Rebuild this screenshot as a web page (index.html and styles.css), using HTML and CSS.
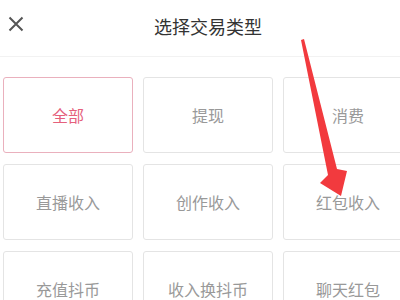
FILE: index.html
```html
<!DOCTYPE html>
<html lang="zh">

<head>
    <meta charset="UTF-8">
    <meta name="viewport" content="width=device-width, initial-scale=1.0">
    <title>选择交易类型</title>
    <link rel="stylesheet" href="styles.css">
</head>

<body>
    <div class="page">
        <div class="header">
            <svg class="close" width="16" height="16" viewBox="0 0 16 16">
                <path d="M1.5 1.5 L14.5 14.5 M14.5 1.5 L1.5 14.5" stroke="#555" stroke-width="2" fill="none" />
            </svg>
            <h1 class="title">选择交易类型</h1>
        </div>
        <main class="grid">
            <div class="item active">全部</div>
            <div class="item">提现</div>
            <div class="item">消费</div>
            <div class="item">直播收入</div>
            <div class="item">创作收入</div>
            <div class="item">红包收入</div>
            <div class="item">充值抖币</div>
            <div class="item">收入换抖币</div>
            <div class="item">聊天红包</div>
        </main>
        <!-- red arrow pointing at 红包收入 -->
        <svg class="arrow" width="400" height="300" viewBox="0 0 400 300">
            <path d="M301 40 L304 39 L337 169 L347 171 L341 196 L320 183 L328 175 Z" fill="#f23a3e" />
        </svg>
    </div>
</body>

</html>
```

FILE: styles.css
```css
body {
    margin: 0px;
    padding: 0px;
    background: #fff;
    font-family: "Noto Sans CJK SC", "Noto Sans", sans-serif;
}

.page {
    position: relative;
    width: 400px;
    height: 300px;
    overflow: hidden;
}

.header {
    position: relative;
    height: 56px;
    border-bottom: 1px solid #f2f2f2;
    display: flex;
    align-items: center;
    justify-content: center;
}

.close {
    position: absolute;
    left: 8px;
    top: 16px;
}

.title {
    margin: 0px;
    margin-left: 16px;
    margin-top: -4px;
    font-size: 18px;
    font-weight: normal;
    color: #333;
}

.grid {
    display: grid;
    grid-template-columns: 130px 130px 130px;
    grid-auto-rows: 76px;
    gap: 11px 10px;
    padding: 20px 0px 0px 3px;
}

.item {
    box-sizing: border-box;
    border: 1px solid #e4e4e4;
    border-radius: 3px;
    display: flex;
    align-items: center;
    justify-content: center;
    font-size: 16px;
    color: #999;
}

.active {
    border-color: #eab0bd;
    color: #e5607c;
}

.arrow {
    position: absolute;
    left: 0px;
    top: 0px;
}
```
